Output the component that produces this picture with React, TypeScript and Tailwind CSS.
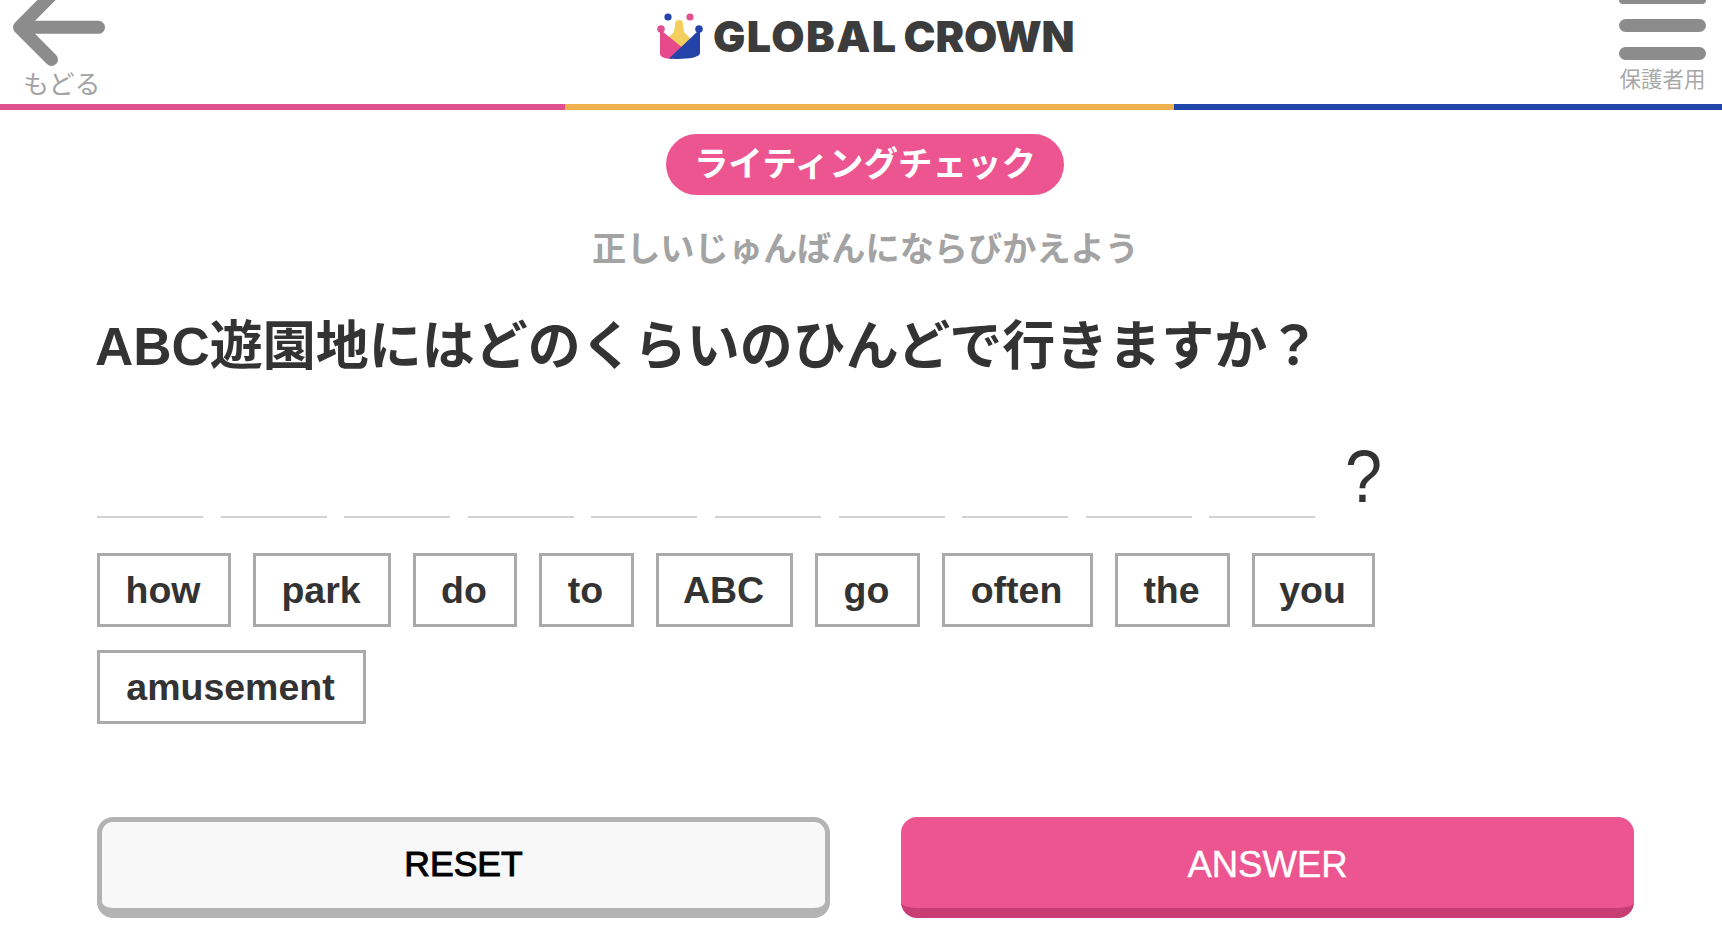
const jp = "font-['Liberation_Sans','Noto_Sans_CJK_JP',sans-serif]";

const slots = Array.from({ length: 10 }, (_, i) => i);
const words = [
  { text: "how", width: "w-[134px]" },
  { text: "park", width: "w-[138px]" },
  { text: "do", width: "w-[104px]" },
  { text: "to", width: "w-[95px]" },
  { text: "ABC", width: "w-[137px]" },
  { text: "go", width: "w-[105px]" },
  { text: "often", width: "w-[151px]" },
  { text: "the", width: "w-[115px]" },
  { text: "you", width: "w-[123px]" },
  { text: "amusement", width: "w-[269px]" },
];

function CrownLogo() {
  return (
    <svg width="46" height="46" viewBox="0 0 46 46" className="shrink-0">
      <circle cx="11" cy="4" r="3.6" fill="#2343a8" />
      <circle cx="33" cy="4" r="3.6" fill="#e2508f" />
      <circle cx="4" cy="16" r="3.8" fill="#e2508f" />
      <circle cx="42" cy="16" r="3.8" fill="#2343a8" />
      <circle cx="22" cy="11" r="4" fill="#f5cf5e" />
      <path d="M18 12 L26 12 L27 19 L35 27 L24 37 L10 26 L17 19 Z" fill="#f5cf5e" />
      <path d="M3 18 L5 18 L27 36 L14 46 C8 45.5 3 44 3 41 Z" fill="#e64a8a" />
      <path d="M43 18 L41 18 L12 45.5 C22 46.5 43 46 43 40 Z" fill="#2343a8" />
    </svg>
  );
}

function BackArrow() {
  return (
    <svg width="110" height="68" viewBox="0 0 110 68" className="shrink-0">
      <path
        d="M98.5 27.3 H19.5 M19.5 27.3 L51.5 59.5 M19.5 27.3 L51.5 -5"
        fill="none"
        stroke="#8c8c8c"
        strokeWidth="13"
        strokeLinecap="round"
        strokeLinejoin="round"
      />
    </svg>
  );
}

export default function App() {
  return (
    <div className={`min-h-[950px] overflow-hidden bg-white ${jp}`}>
      {/* Header */}
      <header className="flex h-[104px] overflow-hidden">
        <div className="flex w-[657px] shrink-0 flex-col items-start">
          <BackArrow />
          <span className="mt-[3px] ml-[23px] text-[26px] leading-[28px] text-[#a3a3a3]">もどる</span>
        </div>
        <div className="flex h-[72px] w-[420px] shrink-0 items-center gap-[10px]">
          <CrownLogo />
          <span className="flex gap-[6px] font-['Inter',sans-serif] text-[43px] leading-none font-black text-[#3c3c3c]">
            <span className="tracking-[1.4px]">GLOBAL</span>
            <span className="tracking-[-0.2px]">CROWN</span>
          </span>
        </div>
        <div className="mr-[16px] ml-auto flex w-[87px] flex-col gap-[15px]">
          <div className="h-[4px] rounded-b-full bg-[#8c8c8c]" />
          <div className="h-[13px] rounded-full bg-[#8c8c8c]" />
          <div className="h-[13px] rounded-full bg-[#8c8c8c]" />
          <span className="-mt-[8px] text-center text-[21.5px] leading-[26px] whitespace-nowrap text-[#a8a8a8]">保護者用</span>
        </div>
      </header>
      <div className="flex h-[6px]">
        <div className="w-[565px] bg-[#e0508f]" />
        <div className="w-[609px] bg-[#eeb14e]" />
        <div className="flex-1 bg-[#1f46a8]" />
      </div>

      <main className="flex flex-col pt-[24px] pr-[88px] pl-[97px]">
        <div className="mr-[1px] flex h-[61px] w-[398px] items-center justify-center self-center rounded-full bg-[#ec5590] text-[34.5px] font-bold text-white">
          ライティングチェック
        </div>
        <p className="mt-[31px] text-center text-[34.2px] leading-[46px] font-bold text-[#a3a3a3]">
          正しいじゅんばんにならびかえよう
        </p>
        <h1 className="mt-[40px] -ml-[2px] text-[53px] leading-[70px] font-bold whitespace-nowrap text-[#333333]">
          ABC遊園地にはどのくらいのひんどで行きますか？
        </h1>

        {/* Answer slots */}
        <div className="mt-[60px] flex h-[76px] items-end">
          <div className="flex gap-[17.6px]">
            {slots.map((s) => (
              <div key={s} className="h-[2px] w-[106px] bg-[#d2d2d2]" />
            ))}
          </div>
          <span className="mb-[1px] ml-[28px] scale-x-90 font-['Liberation_Sans',sans-serif] text-[74px] leading-[80px] font-normal text-[#333333]">
            ?
          </span>
        </div>

        {/* Word chips */}
        <div className="mt-[35px] flex w-[1400px] flex-wrap gap-x-[22px] gap-y-[23px]">
          {words.map((w) => (
            <div
              key={w.text}
              className={`flex h-[74px] items-center justify-center border-[3px] border-[#aaaaaa] pr-[2px] font-['Liberation_Sans',sans-serif] text-[37.5px] font-bold text-[#333333] ${w.width}`}
            >
              {w.text}
            </div>
          ))}
        </div>

        {/* Buttons */}
        <div className="mt-[93px] grid grid-cols-2 gap-[71px]">
          <button className="flex h-[101px] items-center justify-center rounded-[16px] border-[5px] border-b-[10px] border-[#b3b3b3] bg-[#f8f8f8] font-['Liberation_Sans',sans-serif] text-[35.5px] text-black [-webkit-text-stroke:1px_black]">
            RESET
          </button>
          <button className="flex h-[101px] items-center justify-center rounded-[16px] border-b-[10px] border-[#c93d75] bg-[#ec5590] pt-[5px] font-['Liberation_Sans',sans-serif] text-[36.5px] text-white [-webkit-text-stroke:0.4px_white]">
            ANSWER
          </button>
        </div>
      </main>
    </div>
  );
}
